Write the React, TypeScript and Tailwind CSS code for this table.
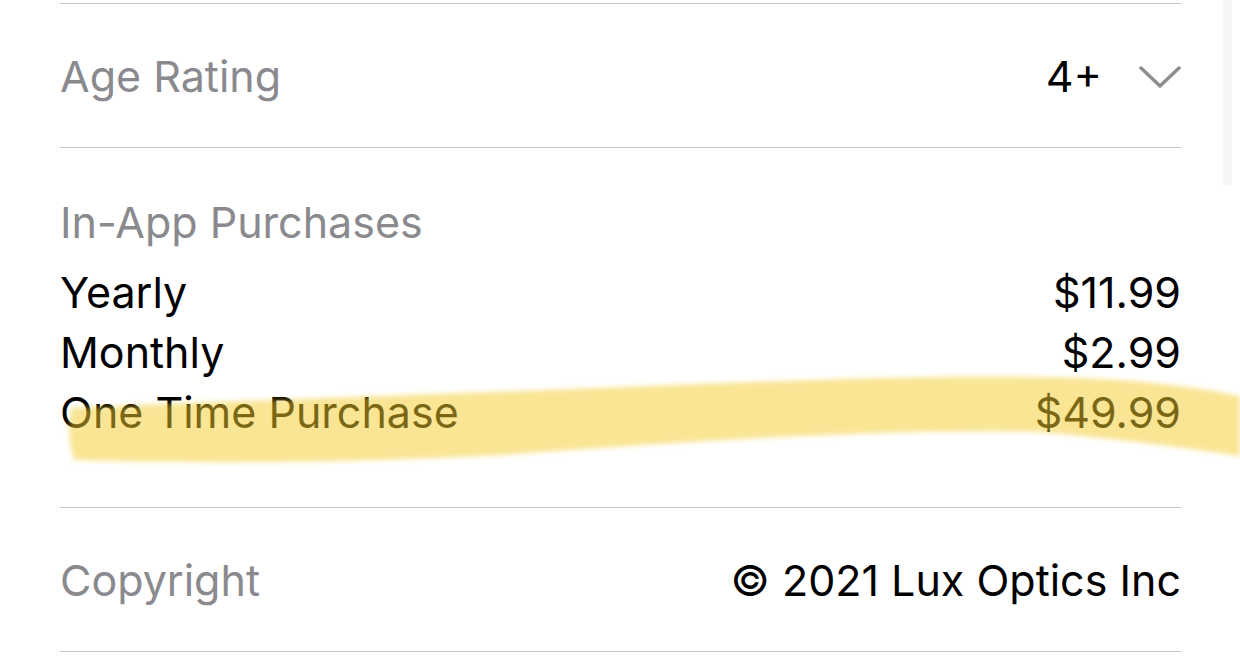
import { ReactNode } from 'react'

const Divider = () => <div className="h-px bg-[#c6c6c8]" />

const Row = ({ label, children }: { label: string; children: ReactNode }) => (
  <div className="h-[143px] flex items-center justify-between">
    <span className="text-[#8a8a8e]">{label}</span>
    {children}
  </div>
)

const purchases = [
  { name: 'Yearly', price: '$11.99' },
  { name: 'Monthly', price: '$2.99' },
  { name: 'One Time Purchase', price: '$49.99' },
]

const App = () => {
  return (
    <div className="relative w-[1240px] h-[661px] overflow-hidden bg-white font-['Inter',sans-serif] text-[43px] leading-[60px] text-black">
      <div className="ml-[60px] w-[1121px] pt-[3px]">
        <Divider />

        {/* Age rating */}
        <Row label="Age Rating">
          <div className="flex items-center gap-[37px]">
            <span>4+</span>
            <svg width="42" height="26" viewBox="0 0 42 26" className="mt-[4px]">
              <path
                d="M2 3 L21 21 L40 3"
                fill="none"
                stroke="#8e8e93"
                strokeWidth="3.5"
                strokeLinecap="round"
                strokeLinejoin="round"
              />
            </svg>
          </div>
        </Row>

        <Divider />

        {/* In-app purchases */}
        <div className="h-[359px] pt-[44px]">
          <div className="text-[#8a8a8e]">In-App Purchases</div>
          <div className="mt-[10px]">
            {purchases.map((p) => (
              <div key={p.name} className="flex justify-between">
                <span>{p.name}</span>
                <span>{p.price}</span>
              </div>
            ))}
          </div>
        </div>

        <Divider />

        {/* Copyright */}
        <Row label="Copyright">
          <span>© 2021 Lux Optics Inc</span>
        </Row>

        <Divider />
      </div>

      {/* scroll indicator */}
      <div className="absolute left-[1223px] top-0 w-[9px] h-[186px] rounded-b-full bg-[#f6f6f6]" />

      {/* highlighter stroke */}
      <svg className="absolute left-0 top-0 pointer-events-none" width="1240" height="661">
        <defs>
          <filter id="soft" x="-5%" y="-50%" width="110%" height="200%">
            <feGaussianBlur stdDeviation="2.5" />
          </filter>
        </defs>
        <path
          d="M72 408 C 250 400, 450 394, 650 386 C 800 380, 950 374, 1080 378 C 1160 381, 1210 390, 1240 396 L1240 456 C 1200 450, 1130 440, 1040 432 C 900 428, 700 440, 500 455 C 330 464, 180 463, 74 460 C 68 440, 68 420, 72 408 Z"
          fill="rgb(244,204,40)"
          fillOpacity="0.5"
          filter="url(#soft)"
        />
      </svg>
    </div>
  )
}

export default App
